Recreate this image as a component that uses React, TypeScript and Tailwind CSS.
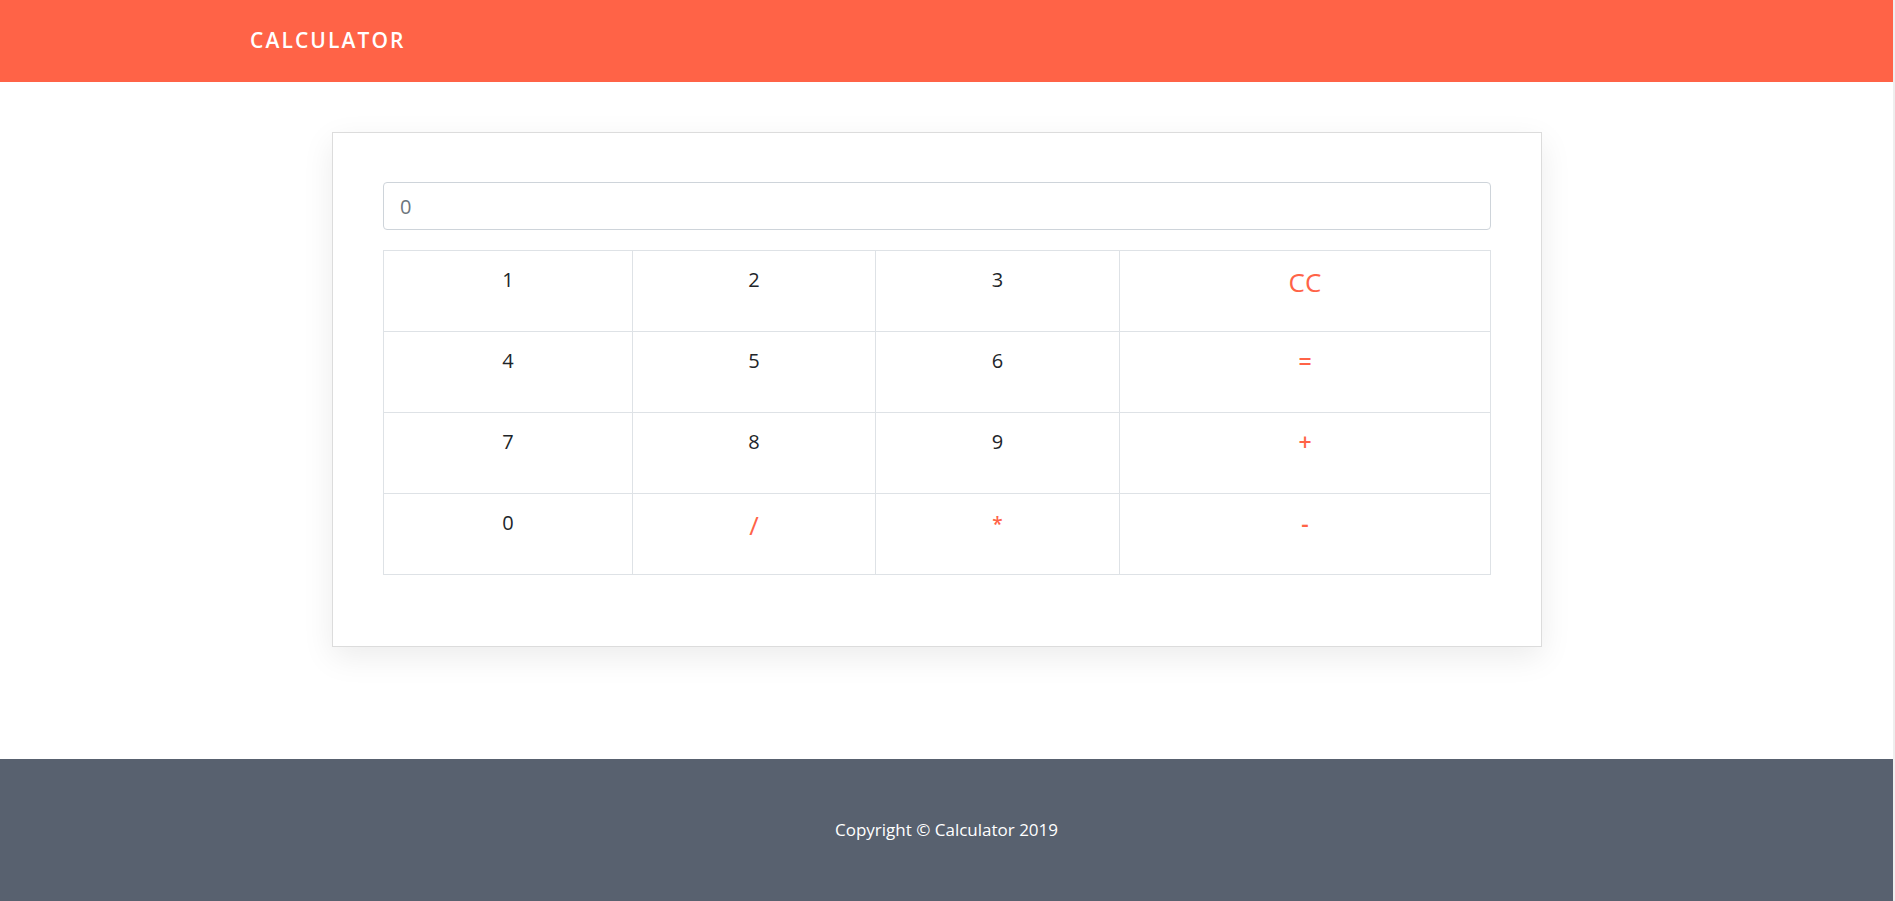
import { useState } from "react";

const KEYS: { label: string; op?: boolean; big?: boolean; small?: boolean }[][] = [
  [{ label: "1" }, { label: "2" }, { label: "3" }, { label: "CC", op: true, big: true }],
  [{ label: "4" }, { label: "5" }, { label: "6" }, { label: "=", op: true }],
  [{ label: "7" }, { label: "8" }, { label: "9" }, { label: "+", op: true }],
  [{ label: "0" }, { label: "/", op: true, big: true }, { label: "*", op: true, small: true }, { label: "-", op: true }],
];

export default function App() {
  const [value, setValue] = useState("");

  return (
    <div className="flex min-h-[901px] w-full bg-white font-['Open_Sans',sans-serif]">
      <div className="flex flex-1 flex-col">
        {/* Header */}
        <header className="flex h-[82px] items-center bg-[#ff6347] pl-[250px]">
          <span className="text-[21px] font-semibold tracking-[0.1em] text-white">CALCULATOR</span>
        </header>

        {/* Calculator card */}
        <main className="pt-[50px] pb-[112px]">
          <div className="ml-[332px] w-[1210px] border border-[#dcdcdc] bg-white px-[50px] pt-[49px] pb-[71px] shadow-[0_10px_30px_rgba(0,0,0,0.08)]">
            <input
              value={value}
              onChange={(e) => setValue(e.target.value)}
              placeholder="0"
              className="block h-[48px] w-full rounded-[4px] border border-[#ced4da] px-4 text-[20px] text-[#495057] placeholder:text-[#6c757d] outline-none"
            />
            <div className="mt-[20px] grid grid-cols-[249px_243px_244px_1fr] border-t border-l border-[#dee2e6]">
              {KEYS.flat().map((k, i) => (
                <button
                  key={i}
                  onClick={() => {
                    if (k.label === "CC") setValue("");
                    else if (k.label !== "=") setValue(value + k.label);
                  }}
                  className={`flex h-[81px] justify-center border-r border-b border-[#dee2e6] ${
                    k.big
                      ? "pt-[12px] text-[26px] leading-[39px]"
                      : k.small
                        ? "pt-[15px] text-[19px] font-semibold leading-[30px]"
                        : k.op
                          ? "pt-[13px] text-[23px] font-semibold leading-[32px]"
                          : "pt-[14px] text-[20px] leading-[30px]"
                  } ${k.op ? "text-[#ff6347]" : "text-[#212529]"}`}
                >
                  {k.label}
                </button>
              ))}
            </div>
          </div>
        </main>

        {/* Footer */}
        <footer className="flex h-[142px] items-center justify-center bg-[#58616f]">
          <p className="text-[17px] text-white">Copyright © Calculator 2019</p>
        </footer>
      </div>
      <div className="w-[2px] bg-[#eeeeee]" />
    </div>
  );
}
